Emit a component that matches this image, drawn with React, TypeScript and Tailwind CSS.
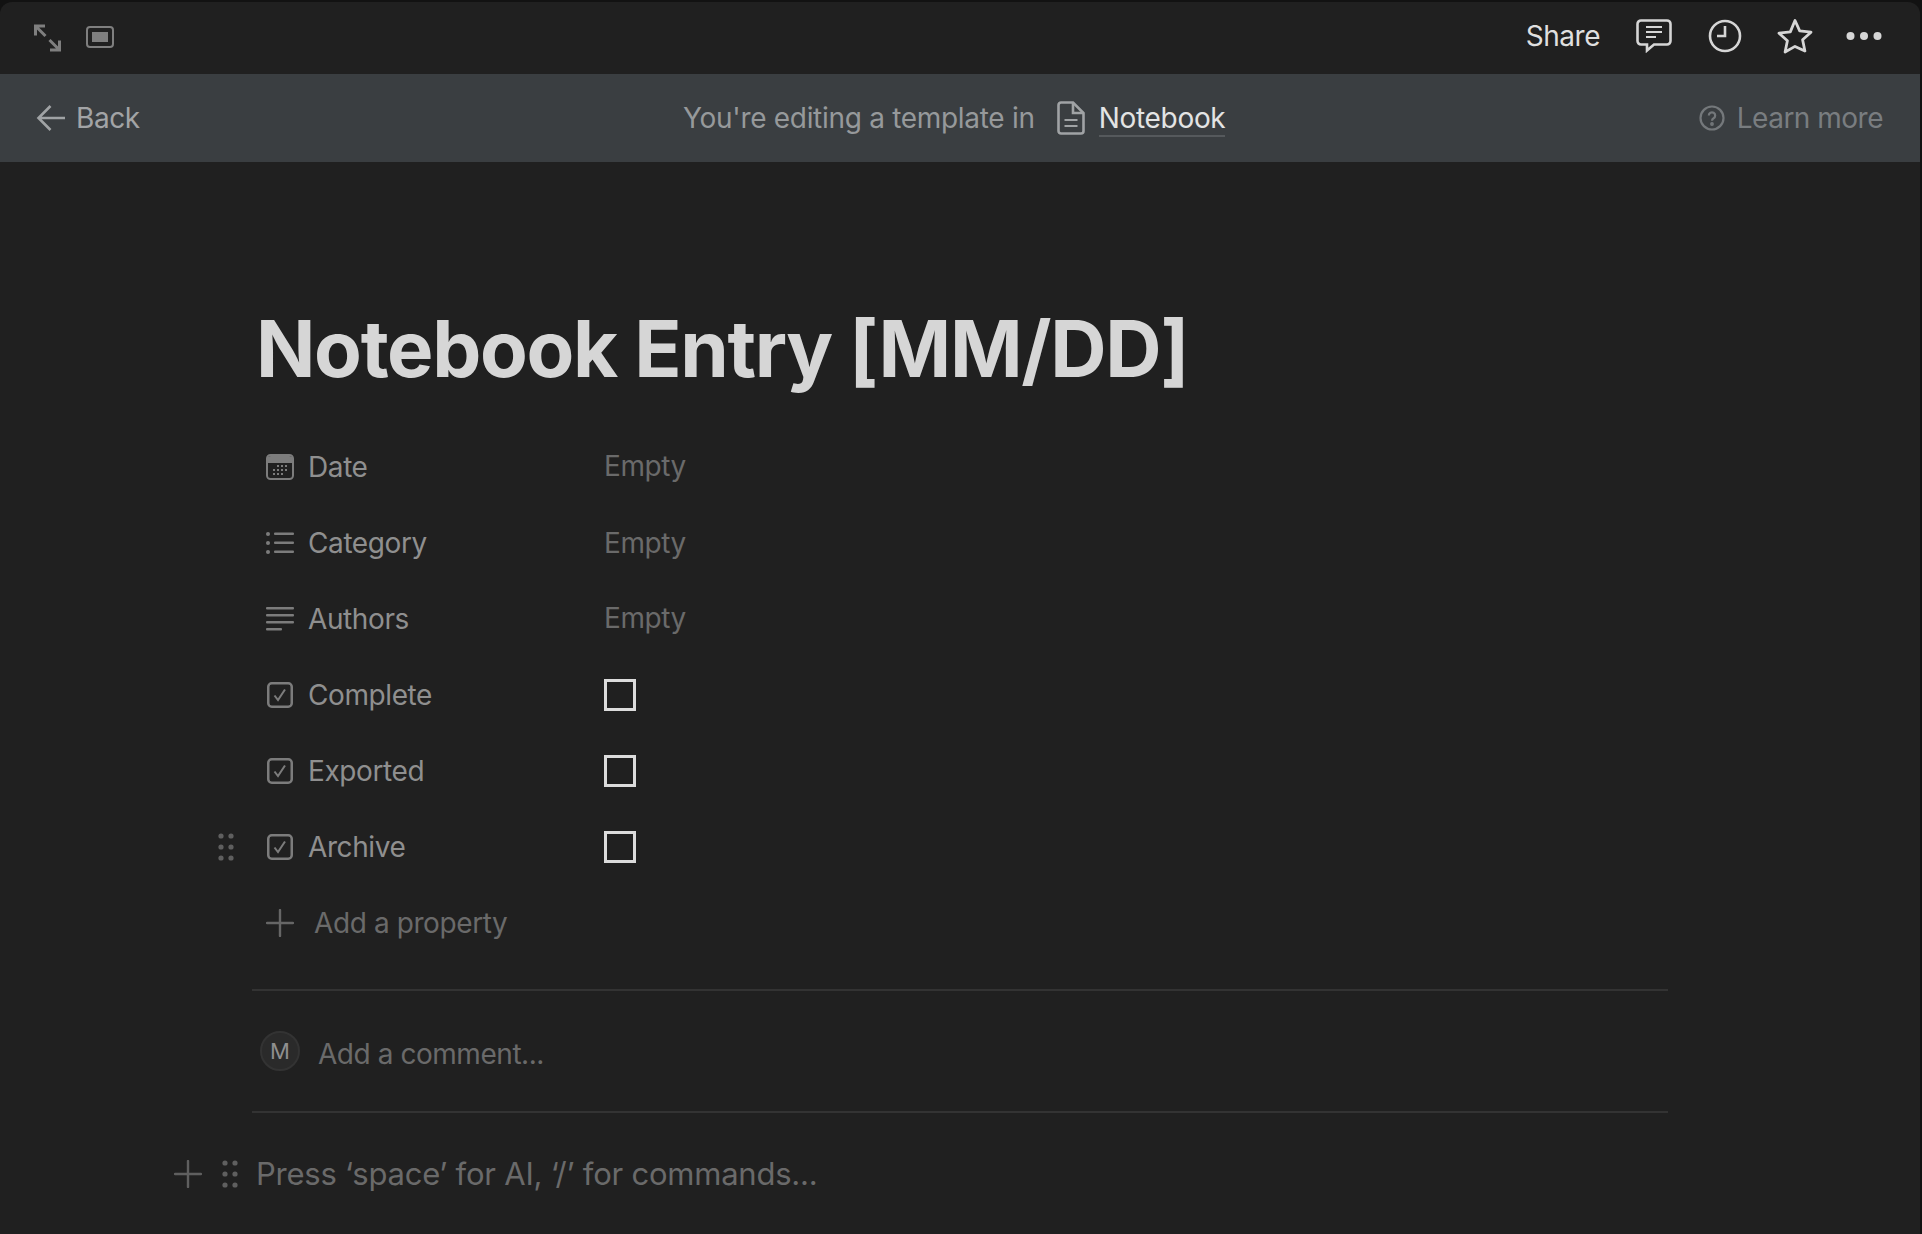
import type {ReactNode} from 'react';

const font = {fontFamily: 'Inter, "Liberation Sans", sans-serif'};

function DragHandle({className}: {className: string}) {
  return (
    <svg className={className} width="16" height="28" viewBox="0 0 16 28" fill="currentColor">
      <circle cx="3" cy="3" r="2.6" />
      <circle cx="13" cy="3" r="2.6" />
      <circle cx="3" cy="14" r="2.6" />
      <circle cx="13" cy="14" r="2.6" />
      <circle cx="3" cy="25" r="2.6" />
      <circle cx="13" cy="25" r="2.6" />
    </svg>
  );
}

function PlusIcon({className}: {className: string}) {
  return (
    <svg className={className} width="28" height="28" viewBox="0 0 28 28" stroke="currentColor" strokeWidth="2.4" strokeLinecap="round">
      <path d="M14 1v26M1 14h26" />
    </svg>
  );
}

function CalendarIcon() {
  return (
    <svg width="28" height="26" viewBox="0 0 28 26" fill="none">
      <rect x="1" y="1" width="26" height="24" rx="3.5" stroke="currentColor" strokeWidth="2" />
      <path d="M1 6a4 4 0 0 1 4-4h18a4 4 0 0 1 4 4v3H1z" fill="currentColor" />
      <g fill="currentColor">
        <rect x="11" y="11" width="2" height="2" />
        <rect x="15" y="11" width="2" height="2" />
        <rect x="19" y="11" width="2" height="2" />
        <rect x="7" y="15" width="2" height="2" />
        <rect x="11" y="15" width="2" height="2" />
        <rect x="15" y="15" width="2" height="2" />
        <rect x="19" y="15" width="2" height="2" />
        <rect x="7" y="19" width="2" height="2" />
        <rect x="11" y="19" width="2" height="2" />
        <rect x="15" y="19" width="2" height="2" />
      </g>
    </svg>
  );
}

function ListIcon() {
  return (
    <svg width="28" height="22" viewBox="0 0 28 22" fill="currentColor">
      <circle cx="2" cy="2" r="2" />
      <circle cx="2" cy="11" r="2" />
      <circle cx="2" cy="20" r="2" />
      <rect x="8" y="0.5" width="20" height="2.500" rx="1" />
      <rect x="8" y="9.500" width="20" height="2.500" rx="1" />
      <rect x="8" y="18.500" width="20" height="2.500" rx="1" />
    </svg>
  );
}

function TextIcon() {
  return (
    <svg width="28" height="24" viewBox="0 0 28 24" fill="currentColor">
      <rect y="0" width="28" height="2.500" rx="1" />
      <rect y="7" width="28" height="2.500" rx="1" />
      <rect y="14" width="28" height="2.500" rx="1" />
      <rect y="21" width="16" height="2.500" rx="1" />
    </svg>
  );
}

function CheckIcon() {
  return (
    <svg width="26" height="26" viewBox="0 0 26 26" fill="none" stroke="currentColor">
      <rect x="1.250" y="1.250" width="23.500" height="23.500" rx="3.5" strokeWidth="2.500" />
      <path d="M7.500 13.500l3.500 4.500L18 7.500" strokeWidth="2" />
    </svg>
  );
}

function PropertyRow({icon, label, children}: {icon: ReactNode; label: string; children: ReactNode}) {
  return (
    <div className="relative flex h-[76px] items-center pl-[14px]">
      <div className="flex w-[28px] shrink-0 justify-center text-[#7c7c7c]">{icon}</div>
      <div className="ml-[14px] w-[296px] text-[28px] tracking-[-0.4px] text-[#8f8f8f]">{label}</div>
      {children}
    </div>
  );
}

function Empty({lift}: {lift?: boolean}) {
  return <div className={lift ? 'pb-[3px] text-[28px] tracking-[-0.4px] text-[#6a6a6a]' : 'text-[28px] tracking-[-0.4px] text-[#6a6a6a]'}>Empty</div>;
}

function Checkbox() {
  return <div className="h-[32px] w-[32px] border-[3px] border-[#dcdcdc]" />;
}

export default function App() {
  return (
    <div className="h-[1234px] w-[1922px] overflow-hidden bg-[#121212] pt-[2px] pr-[2px]" style={font}>
      <div className="h-full overflow-hidden rounded-t-[12px] bg-[#202020]">
        {/* Top bar */}
        <div className="flex h-[72px] items-center pb-[4px] pl-[33px] pr-[38px]">
          <svg className="mt-[4px]" width="29" height="28" viewBox="0 0 29 28" fill="none" stroke="#7f7f7f" strokeWidth="3">
            <path d="M2.500 11.500V2h9.500M2.500 2l10 10M26.500 16.500V26H17M26.500 26l-10-10" />
          </svg>
          <svg className="ml-[24px] mt-[2px]" width="28" height="22" viewBox="0 0 28 22" fill="none">
            <rect x="1" y="1" width="26" height="20" rx="3" stroke="#7f7f7f" strokeWidth="2" />
            <rect x="6" y="6" width="16" height="10" fill="#7f7f7f" />
          </svg>
          <div className="ml-auto text-[28px] tracking-[-0.5px] text-[#dfdfdf]">Share</div>
          <svg className="ml-[36px]" width="36" height="34" viewBox="0 0 36 34" fill="none" stroke="#d6d6d6" strokeWidth="2.6">
            <path d="M5 1.500h26a3.500 3.500 0 0 1 3.500 3.500v17a3.500 3.500 0 0 1-3.500 3.500H18l-7 6v-6H5A3.500 3.500 0 0 1 1.500 22V5A3.500 3.500 0 0 1 5 1.500z" />
            <path d="M10 8h16M10 13h16M10 18h10" strokeWidth="2" />
          </svg>
          <svg className="ml-[36px]" width="34" height="34" viewBox="0 0 34 34" fill="none" stroke="#d6d6d6" strokeWidth="2.6">
            <circle cx="17" cy="17" r="15" />
            <path d="M17 7v10H9" />
          </svg>
          <svg className="ml-[35px]" width="36" height="36" viewBox="0 0 36 36" fill="none" stroke="#d6d6d6" strokeWidth="2.800" strokeLinejoin="round">
            <path d="M18 2.500l4.700 10.400 11.300 1.300-8.400 7.600 2.300 11.200L18 28.400 8.100 34l2.300-11.200L2 15.200l11.300-1.300z" />
          </svg>
          <svg className="ml-[33px]" width="36" height="10" viewBox="0 0 36 10" fill="#d6d6d6">
            <circle cx="4.500" cy="5" r="4" />
            <circle cx="18" cy="5" r="4" />
            <circle cx="31.500" cy="5" r="4" />
          </svg>
        </div>

        {/* Template banner */}
        <div className="flex h-[88px] items-center bg-[#3a3e41] pl-[36px] pr-[37px]">
          <div className="flex w-[647px] items-center">
            <svg width="30" height="30" viewBox="0 0 30 30" fill="none" stroke="#a0a3a5" strokeWidth="2.6">
              <path d="M29 15H3M14.500 3L2.500 15l12 12" />
            </svg>
            <span className="ml-[10px] text-[28px] tracking-[-0.4px] text-[#a2a4a6]">Back</span>
          </div>
          <span className="text-[28px] tracking-[-0.3px] text-[#96999b]">You're editing a template in</span>
          <svg className="ml-[22px]" width="28" height="34" viewBox="0 0 28 34" fill="none" stroke="#a0a3a5" strokeWidth="2.600">
            <path d="M4 1.500h12L26.500 12v18a2.500 2.500 0 0 1-2.500 2.500H4A2.500 2.500 0 0 1 1.500 30V4A2.500 2.500 0 0 1 4 1.500z" />
            <path d="M16 1.500V12h10.500" />
            <path d="M7.500 19h13M7.500 25h13" strokeWidth="2" />
          </svg>
          <span className="ml-[14px] mt-[2px] border-b-2 border-[#55595c] leading-[34px] text-[28px] tracking-[-0.3px] text-[#e3e4e4]">Notebook</span>
          <svg className="ml-auto" width="26" height="26" viewBox="0 0 26 26" fill="none" stroke="#74787b" strokeWidth="2.200">
            <circle cx="13" cy="13" r="11.500" />
            <path d="M9.800 10.500a3.200 3.200 0 1 1 4.800 2.800c-1 .6-1.600 1.200-1.600 2.400" />
            <circle cx="13" cy="19" r="0.800" />
          </svg>
          <span className="ml-[12px] text-[28px] tracking-[-0.5px] text-[#797d80]">Learn more</span>
        </div>

        {/* Page body */}
        <div className="relative mx-[252px] w-[1416px] pt-[139px]">
          <h1 className="ml-[4px] text-[78px] font-[750] leading-[96px] tracking-[-1.33px] text-[#d6d6d6]">Notebook Entry [MM/DD]</h1>

          <div className="mt-[32px]">
            <PropertyRow icon={<CalendarIcon />} label="Date">
              <Empty lift />
            </PropertyRow>
            <PropertyRow icon={<ListIcon />} label="Category">
              <Empty />
            </PropertyRow>
            <PropertyRow icon={<TextIcon />} label="Authors">
              <Empty lift />
            </PropertyRow>
            <PropertyRow icon={<CheckIcon />} label="Complete">
              <Checkbox />
            </PropertyRow>
            <PropertyRow icon={<CheckIcon />} label="Exported">
              <Checkbox />
            </PropertyRow>
            <PropertyRow icon={<CheckIcon />} label="Archive">
              <DragHandle className="absolute left-[-34px] top-[24px] text-[#5f5f5f]" />
              <Checkbox />
            </PropertyRow>
            <div className="flex h-[76px] items-center pl-[14px]">
              <PlusIcon className="text-[#666666]" />
              <span className="ml-[20px] text-[28px] tracking-[-0.4px] text-[#6a6a6a]">Add a property</span>
            </div>
          </div>

          <div className="mt-[28px] border-y-2 border-[#333333]">
            <div className="flex h-[120px] items-center pl-[8px]">
              <div className="flex h-[40px] w-[40px] items-center justify-center rounded-full border-2 border-[#333333] bg-[#2a2a2a] text-[22px] text-[#8f8f8f]">M</div>
              <span className="ml-[18px] mt-[5px] text-[28px] tracking-[-0.45px] text-[#6a6a6a]">Add a comment...</span>
            </div>
          </div>

          <div className="relative mt-[37px] flex h-[48px] items-center pl-[4px]">
            <PlusIcon className="absolute left-[-78px] top-[10px] text-[#5f5f5f]" />
            <DragHandle className="absolute left-[-30px] top-[10px] text-[#5f5f5f]" />
            <span className="text-[31px] tracking-[-0.23px] text-[#6a6a6a]">Press ‘space’ for AI, ‘/’ for commands...</span>
          </div>
        </div>
      </div>
    </div>
  );
}
